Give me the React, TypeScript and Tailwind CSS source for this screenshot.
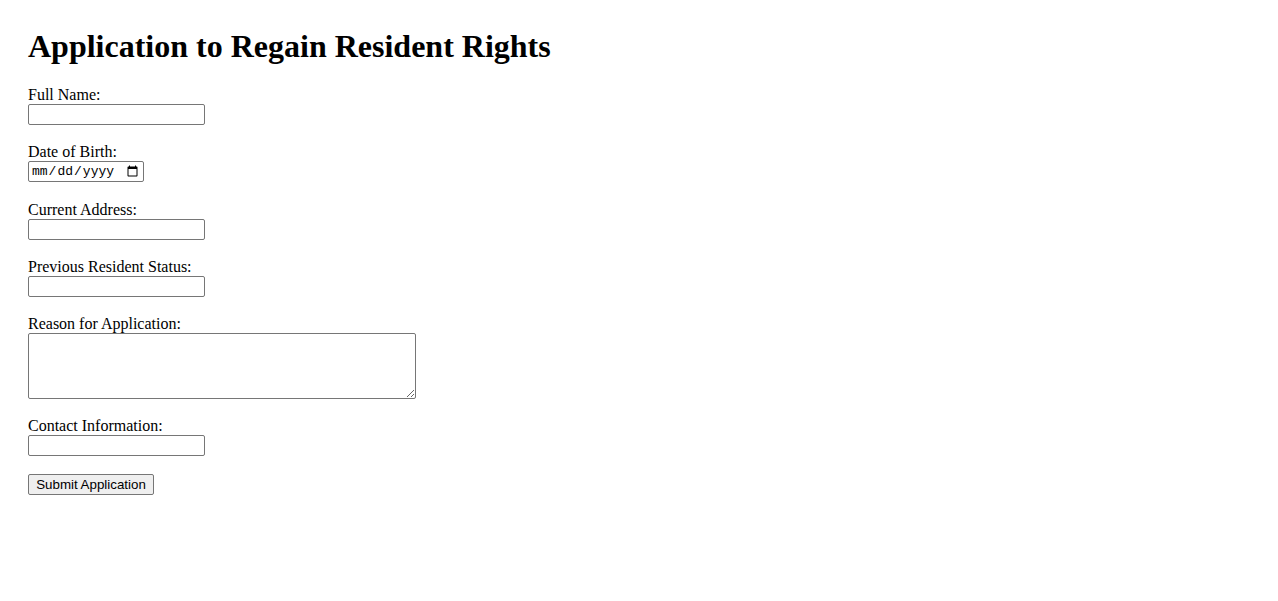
import { useState } from 'react';

const serif = { fontFamily: '"Liberation Serif", "Times New Roman", serif' };

const inputClass =
  'block w-[177px] h-[21px] border border-[#767676] rounded-[2px] bg-white px-[2px] text-[13.33px] font-["Liberation_Sans",Arial,sans-serif] outline-none';

function Field({ label, className = 'mb-[18.25px]', children }: { label: string; className?: string; children: React.ReactNode }) {
  return (
    <div className={className}>
      <label className="block text-[16px] leading-[18px]">{label}</label>
      {children}
    </div>
  );
}

export default function App() {
  const [form, setForm] = useState({
    name: '',
    dob: '',
    address: '',
    status: '',
    reason: '',
    contact: '',
  });

  const update = (key: keyof typeof form) => (e: React.ChangeEvent<HTMLInputElement | HTMLTextAreaElement>) =>
    setForm({ ...form, [key]: e.target.value });

  return (
    <div className="min-h-[601px] bg-white pl-[28px] pt-[28px] text-black" style={serif}>
      <h1 className="mb-[21px] text-[32px] font-bold leading-[37px]">Application to Regain Resident Rights</h1>
      <form onSubmit={(e) => e.preventDefault()}>
        <Field label="Full Name:">
          <input type="text" value={form.name} onChange={update('name')} className={inputClass} />
        </Field>
        <Field label="Date of Birth:">
          <input
            type="date"
            value={form.dob}
            onChange={update('dob')}
            className='block w-[116px] h-[21px] border border-[#767676] rounded-[2px] bg-white pl-[2px] pr-[2px] text-[13px] font-["Liberation_Mono",monospace] outline-none'
          />
        </Field>
        <Field label="Current Address:">
          <input type="text" value={form.address} onChange={update('address')} className={inputClass} />
        </Field>
        <Field label="Previous Resident Status:">
          <input type="text" value={form.status} onChange={update('status')} className={inputClass} />
        </Field>
        <Field label="Reason for Application:">
          <textarea
            value={form.reason}
            onChange={update('reason')}
            className='block w-[388px] h-[66px] border border-[#767676] rounded-[2px] bg-white p-[2px] text-[13.33px] font-["Liberation_Mono",monospace] outline-none'
          />
        </Field>
        <Field label="Contact Information:" className="mb-[18px]">
          <input type="text" value={form.contact} onChange={update('contact')} className={inputClass} />
        </Field>
        <button
          type="submit"
          className='block h-[21px] w-[126px] border border-[#767676] rounded-[2px] bg-[#efefef] px-[6px] text-[13.33px] leading-[19px] font-["Liberation_Sans",Arial,sans-serif] text-black'
        >
          Submit Application
        </button>
      </form>
    </div>
  );
}
